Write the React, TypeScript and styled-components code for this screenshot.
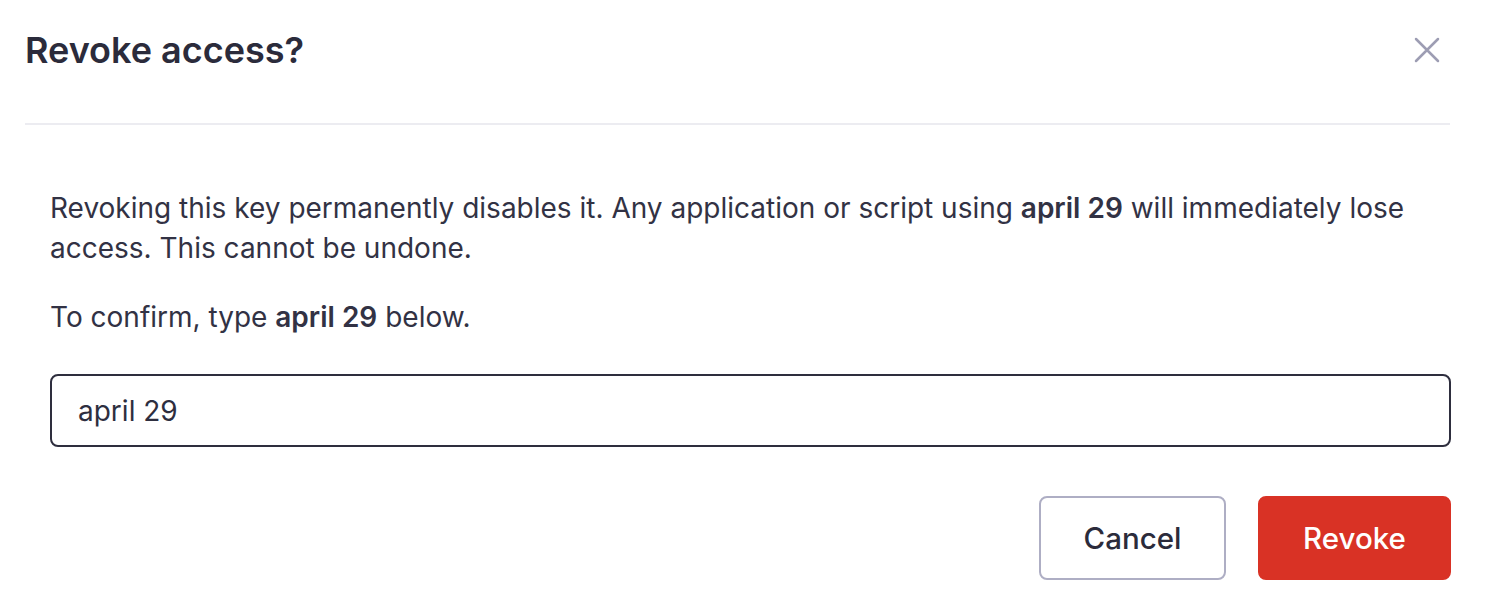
import React from "react";
import styled, { createGlobalStyle } from "styled-components";

const Global = createGlobalStyle`
  html, body { margin: 0; padding: 0; background: #ffffff; }
  body { font-family: Inter, "Noto Sans", "Liberation Sans", sans-serif; color: #2e2e3f; }
  * { box-sizing: border-box; }
`;

const Dialog = styled.div`
  width: 1498px;
  height: 612px;
  background: #ffffff;
  display: flex;
  flex-direction: column;
`;

const Header = styled.div`
  display: flex;
  align-items: center;
  justify-content: space-between;
  margin: 0 48px 0 25px;
  height: 125px;
  border-bottom: 2px solid #ececf1;
  padding-bottom: 23px;
`;

const Title = styled.h2`
  margin: 0;
  font-size: 36px;
  font-weight: 600;
  color: #2b2b3b;
`;

const CloseButton = styled.button`
  border: none;
  background: transparent;
  padding: 0;
  width: 28px;
  height: 28px;
  margin-right: 9px;
  display: flex;
  align-items: center;
  justify-content: center;
  cursor: pointer;
`;

const Body = styled.div`
  display: flex;
  flex-direction: column;
  padding: 63px 47px 0 50px;
`;

const Paragraph = styled.p`
  margin: 0 0 29px 0;
  font-size: 28px;
  line-height: 40px;
  color: #323244;
`;

const Strong = styled.strong`
  font-weight: 600;
`;

const Input = styled.input`
  margin-top: 8px;
  height: 73px;
  width: 100%;
  border: 2px solid #2e2e3e;
  border-radius: 8px;
  padding: 0 26px;
  font-family: inherit;
  font-size: 28px;
  color: #2e2e3f;
  outline: none;
  caret-color: #2e2e3e;
`;

const Actions = styled.div`
  display: flex;
  justify-content: flex-end;
  gap: 32px;
  margin-top: 49px;
`;

const Button = styled.button<{ $variant: "secondary" | "danger" }>`
  height: 84px;
  border-radius: 8px;
  font-family: inherit;
  font-size: 29.5px;
  font-weight: 500;
  cursor: pointer;
  border: 2px solid ${(p) => (p.$variant === "danger" ? "#d93225" : "#aeaec4")};
  background: ${(p) => (p.$variant === "danger" ? "#d93225" : "#ffffff")};
  color: ${(p) => (p.$variant === "danger" ? "#ffffff" : "#2b2b3b")};
  width: ${(p) => (p.$variant === "danger" ? "193px" : "187px")};
`;

export default function App() {
  return (
    <>
      <Global />
      <Dialog>
        <Header>
          <Title>Revoke access?</Title>
          <CloseButton aria-label="Close">
            <svg width="26" height="26" viewBox="0 0 26 26" fill="none">
              <path d="M2 2L24 24M24 2L2 24" stroke="#9d9db3" strokeWidth="2.5" strokeLinecap="round" />
            </svg>
          </CloseButton>
        </Header>
        <Body>
          <Paragraph>
            Revoking this key permanently disables it. Any application or script using <Strong>april 29</Strong> will
            immediately lose access. This cannot be undone.
          </Paragraph>
          <Paragraph>
            To confirm, type <Strong>april 29</Strong> below.
          </Paragraph>
          <Input defaultValue="april 29" autoFocus />
          <Actions>
            <Button $variant="secondary">Cancel</Button>
            <Button $variant="danger">Revoke</Button>
          </Actions>
        </Body>
      </Dialog>
    </>
  );
}
